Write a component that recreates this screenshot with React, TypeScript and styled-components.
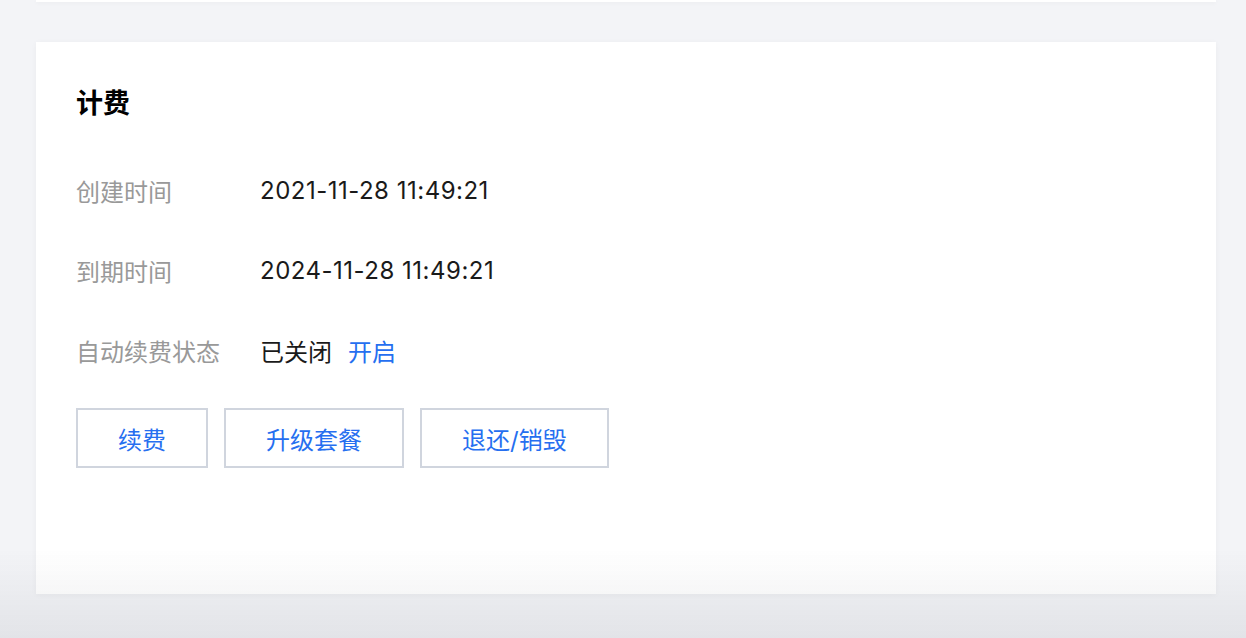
import styled, { createGlobalStyle } from "styled-components";

const colors = {
  page: "#f3f4f7",
  card: "#ffffff",
  title: "#000000",
  label: "#999999",
  value: "#1a1a1a",
  link: "#266ff0",
  border: "#d0d5de",
};

const GlobalStyle = createGlobalStyle`
  html, body {
    margin: 0;
    padding: 0;
    background: ${colors.page};
    font-family: "Inter", "Noto Sans CJK SC", sans-serif;
    -webkit-font-smoothing: antialiased;
  }
`;

interface InfoRowProps {
  label: string;
  children: React.ReactNode;
}

const InfoRow = ({ label, children }: InfoRowProps) => (
  <Row>
    <Label>{label}</Label>
    <Value>{children}</Value>
  </Row>
);

const App = () => {
  return (
    <>
      <GlobalStyle />
      <Page>
        <TopCard />
        <Card>
          <Title>计费</Title>

          <Rows>
            <InfoRow label="创建时间">
              <DateText>2021-11-28 11:49:21</DateText>
            </InfoRow>
            <InfoRow label="到期时间">
              <DateText>2024-11-28 11:49:21</DateText>
            </InfoRow>
            <InfoRow label="自动续费状态">
              已关闭
              <Link>开启</Link>
            </InfoRow>
          </Rows>

          <Actions>
            <Button>续费</Button>
            <Button>升级套餐</Button>
            <Button>退还/销毁</Button>
          </Actions>
        </Card>
      </Page>
      <BottomFade />
    </>
  );
};

const Page = styled.div`
  min-height: 638px;
  padding: 0 30px 0 36px;

  display: flex;
  flex-direction: column;
  gap: 40px;
`;

const TopCard = styled.div`
  height: 2px;

  background-color: ${colors.card};
  box-shadow: 0 1px 4px rgba(0, 0, 0, 0.05);
`;

const Card = styled.div`
  padding: 44px 40px 126px 40px;

  background-color: ${colors.card};
  box-shadow: 0 1px 6px rgba(0, 0, 0, 0.04);
`;

const Title = styled.h2`
  margin: 0;

  font-size: 27px;
  line-height: 36px;
  font-weight: 700;
  color: ${colors.title};
`;

const Rows = styled.div`
  margin-top: 52px;

  display: flex;
  flex-direction: column;
  gap: 48px;
`;

const Row = styled.div`
  display: flex;
  align-items: center;

  height: 32px;
  font-size: 24px;
`;

const Label = styled.div`
  width: 184px;
  flex-shrink: 0;

  color: ${colors.label};
`;

const Value = styled.div`
  display: flex;
  align-items: center;
  gap: 16px;

  color: ${colors.value};
`;

const DateText = styled.span`
  letter-spacing: 0.5px;
`;

const Link = styled.a`
  color: ${colors.link};
  cursor: pointer;
`;

const Actions = styled.div`
  margin-top: 42px;

  display: flex;
  gap: 16px;
`;

const Button = styled.button`
  height: 60px;
  padding: 0 40px;

  border: 2px solid ${colors.border};
  border-radius: 0;
  background-color: ${colors.card};

  font-family: inherit;
  font-size: 24px;
  color: ${colors.link};

  cursor: pointer;
`;

const BottomFade = styled.div`
  position: fixed;
  left: 0;
  right: 0;
  bottom: 0;
  height: 90px;

  background: linear-gradient(
    to bottom,
    rgba(20, 24, 40, 0),
    rgba(20, 24, 40, 0.07)
  );
  pointer-events: none;
`;

export default App;
